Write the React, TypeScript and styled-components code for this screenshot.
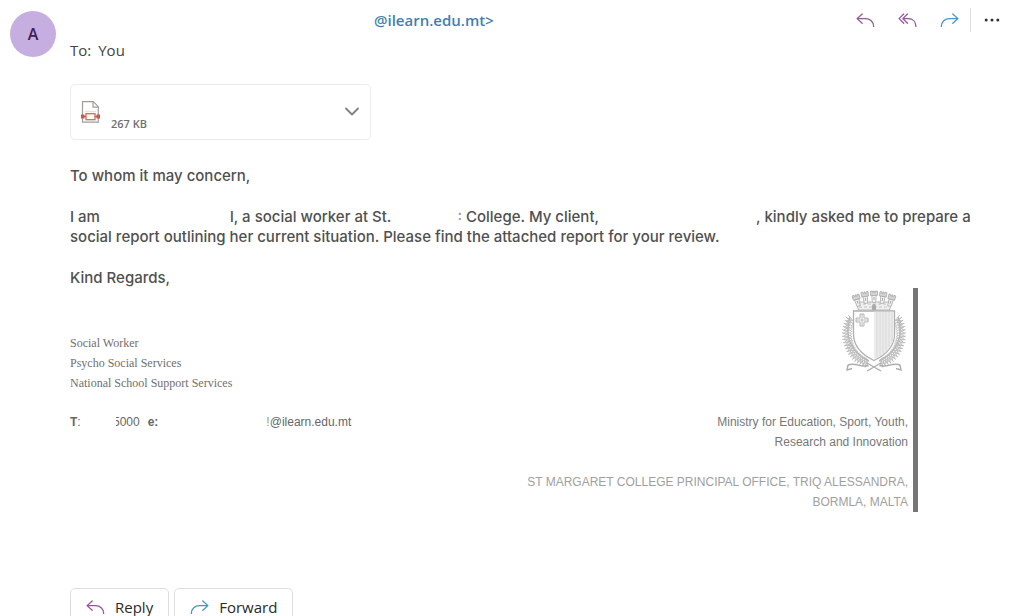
import React from "react";
import styled, { createGlobalStyle } from "styled-components";

const Global = createGlobalStyle`
  *, *::before, *::after { box-sizing: border-box; }
  body { margin: 0; background: #fff; font-family: "Open Sans", "Noto Sans", sans-serif; color: #444; }
  p { margin: 0; }
`;

const Page = styled.article`
  height: 100vh;
  overflow: hidden;
  display: grid;
  grid-template-columns: 46px minmax(0, 1fr);
  column-gap: 14px;
  padding: 8px 12px 0 10px;
`;

const Avatar = styled.div`
  width: 46px;
  height: 46px;
  margin-top: 3px;
  border-radius: 50%;
  background: #c6afe0;
  color: #3d2058;
  display: flex;
  align-items: center;
  justify-content: center;
  font-size: 16px;
  font-weight: 600;
`;

const Content = styled.div`
  display: flex;
  flex-direction: column;
  min-width: 0;
`;

const TopRow = styled.header`
  display: flex;
  justify-content: space-between;
  align-items: center;
  height: 24px;
`;

const Sender = styled.a`
  margin-left: 304px;
  font-size: 15px;
  line-height: 24px;
  font-weight: 600;
  color: #3f7fb0;
  text-decoration: none;
`;

const Actions = styled.div`
  display: flex;
  align-items: center;
`;

const IconButton = styled.button`
  width: 42px;
  height: 24px;
  padding: 0;
  border: 0;
  background: none;
  display: flex;
  align-items: center;
  justify-content: center;
`;

const MoreButton = styled(IconButton)`
  border-left: 1px solid #dedede;
`;

const Recipients = styled.p`
  margin-top: 8px;
  font-size: 15px;
  line-height: 20px;
`;

const Label = styled.span`
  margin-right: 7px;
`;

const Attachment = styled.div`
  width: 301px;
  height: 56px;
  margin-top: 24px;
  padding: 0 10px;
  border: 1px solid #ececec;
  border-radius: 5px;
  display: flex;
  align-items: center;
`;

const FileSize = styled.span`
  flex: 1;
  align-self: flex-end;
  margin: 0 0 6px 11px;
  font-size: 11px;
  line-height: 18px;
  font-weight: 600;
  color: #707070;
`;

const ExpandButton = styled(IconButton)`
  width: 16px;
`;

const Letter = styled.div`
  margin-top: 26px;
  display: flex;
  flex-direction: column;
  gap: 21px;
  font-family: Inter, sans-serif;
  font-size: 15px;
  font-weight: 500;
  line-height: 20px;
  color: #505050;
`;

const Gap = styled.span<{ $width: number }>`
  display: inline-block;
  width: ${(p) => p.$width}px;
`;

const Faint = styled.span`
  color: #999;
`;

const Signature = styled.section`
  max-width: 848px;
  padding-right: 5px;
  border-right: 5px solid #757575;
  display: grid;
  grid-template-columns: auto 1fr;
  grid-template-rows: 124px auto;
  font-family: "Liberation Sans", Arial, sans-serif;
  font-size: 12px;
  line-height: 20px;
  color: #777;
`;

const Titles = styled.div`
  padding-top: 45px;
  font-family: "Liberation Serif", "Times New Roman", serif;
  color: #707070;
`;

const CrestCell = styled.div`
  justify-self: end;
  padding-top: 2px;
`;

const Contact = styled.p`
  color: #666;
`;

const Clipped = styled.span<{ $width: number }>`
  display: inline-flex;
  justify-content: flex-end;
  overflow: hidden;
  vertical-align: bottom;
  width: ${(p) => p.$width}px;
`;

const Office = styled.div`
  text-align: right;
`;

const Address = styled.p`
  margin-top: 20px;
  color: #a0a0a0;
`;

const ReplyBar = styled.footer`
  display: flex;
  gap: 5px;
  margin-top: 76px;
`;

const ReplyButton = styled.button`
  height: 38px;
  padding: 0 15px;
  border: 1px solid #dedede;
  border-radius: 5px;
  background: #fff;
  color: #2a2a2a;
  font-family: inherit;
  font-size: 15px;
  line-height: 18px;
  display: flex;
  align-items: center;
  gap: 10px;
`;

const PURPLE = "#96569f";
const BLUE = "#4696c4";

const ReplyIcon = () => (
  <svg width="19" height="15" viewBox="0 0 20 16" fill="none" stroke={PURPLE} strokeWidth="1.4" strokeLinecap="round" strokeLinejoin="round">
    <path d="M6.500 1 1 6l5.500 5M1.300 6H10c5 0 8.500 3.500 8.700 8.300" />
  </svg>
);

const ReplyAllIcon = () => (
  <svg width="19" height="15" viewBox="0 0 20 16" fill="none" stroke={PURPLE} strokeWidth="1.4" strokeLinecap="round" strokeLinejoin="round">
    <path d="M6 1 1 6l5 5M10 1 5 6l5 5M5.300 6H11c4.800 0 7.800 3.500 8 8.300" />
  </svg>
);

const ForwardIcon = () => (
  <svg width="19" height="15" viewBox="0 0 20 16" fill="none" stroke={BLUE} strokeWidth="1.4" strokeLinecap="round" strokeLinejoin="round">
    <path d="M13.500 1 19 6l-5.500 5M18.700 6H10c-5 0-8.500 3.500-8.700 8.300" />
  </svg>
);

const MoreIcon = () => (
  <svg width="16" height="4" viewBox="0 0 16 4" fill="#333">
    <circle cx="2.2" cy="2" r="1.5" />
    <circle cx="8" cy="2" r="1.5" />
    <circle cx="13.8" cy="2" r="1.5" />
  </svg>
);

const ChevronIcon = () => (
  <svg width="16" height="10" viewBox="0 0 16 10" fill="none" stroke="#808080" strokeWidth="1.8" strokeLinecap="round" strokeLinejoin="round">
    <path d="m2 1.500 6 6 6-6" />
  </svg>
);

const FileIcon = () => (
  <svg width="19" height="22" viewBox="0 0 19 22" fill="none">
    <path d="M1.500 .7h10.800l5 5v15.500H1.500z" fill="#fff" stroke="#a29d99" strokeWidth="1.2" />
    <path d="M12 .7v5.500h5.300" stroke="#a29d99" strokeWidth="1.2" />
    <path d="M4 10.500h11" stroke="#eee3dc" strokeWidth="1.5" />
    <path d="M0 13.500h3.500v4H0zM15.500 13.500H19v4h-3.500z" fill="#c9594b" />
    <path d="M3 15.500h2M14 15.500h2" stroke="#c9594b" strokeWidth="1.5" />
    <rect x="5" y="12.700" width="9" height="6" fill="#fffaf2" stroke="#c9705c" strokeWidth="1.3" />
  </svg>
);

const leaves = Array.from({ length: 20 }, (_, i) => {
  const deg = 208 - i * 5.4;
  const a = (deg * Math.PI) / 180;
  return { x: 34 + 25 * Math.cos(a), y: 44 + 28 * Math.sin(a), deg };
});

const Wreath = () => (
  <g fill="none" stroke="#b8b8b8" strokeWidth=".8">
    <path d="M10 27C4 46 11 63 29 71" strokeWidth="1.4" />
    {leaves.map((l) => (
      <path
        key={l.deg}
        transform={`translate(${l.x} ${l.y}) rotate(${l.deg})`}
        d="M-2 0 6 3.500M0 0l7 .5M0 1l5-3.500M-1 0l-2 2.500"
      />
    ))}
  </g>
);

const towers = [
  { x: 15.5, y: 5, tilt: -16 },
  { x: 24.5, y: 2, tilt: -8 },
  { x: 34, y: 1, tilt: 0 },
  { x: 43.5, y: 2, tilt: 8 },
  { x: 52.5, y: 5, tilt: 16 },
];

const Crest = () => (
  <svg width="68" height="84" viewBox="0 0 68 84" role="img" aria-label="Coat of arms of Malta">
    <Wreath />
    <g transform="translate(68 0) scale(-1 1)">
      <Wreath />
    </g>
    <path d="M13.500 21h41v23c0 12-8 20.500-20.500 26.500C21.500 64.500 13.500 56 13.500 44z" fill="#fff" stroke="#b0b0b0" strokeWidth="1.3" />
    <path d="M34 21.700h19.900V44c0 12-8 20-19.900 25.800z" fill="#ebebeb" />
    <path d="M37 22v46M40 22v44M43 22v42M46 22v39M49 22v35M52 22v29" stroke="#d6d6d6" strokeWidth=".8" />
    <path d="M20 24h4v4h4v4h-4v4h-4v-4h-4v-4h4z" fill="#f3f3f3" stroke="#b0b0b0" strokeWidth=".9" />
    <path d="M22 24v12M16 30h12" stroke="#bbb" strokeWidth=".8" />
    <path d="m18.500 20-2-8h35l-2 8z" fill="#f0f0f0" stroke="#b0b0b0" strokeWidth=".9" />
    <path d="M19 17h30M18 14h32" stroke="#b8b8b8" strokeWidth=".8" strokeDasharray="3 2" />
    <path d="M32 20v-4a2 2 0 0 1 4 0v4z" fill="#aaa" />
    {towers.map((t) => (
      <g key={t.x} transform={`translate(${t.x} ${t.y}) rotate(${t.tilt})`} stroke="#adadad" strokeWidth=".8">
        <path d="M-2.200 4.500h4.400l-.5 7h-3.400z" fill="#f2f2f2" />
        <path d="M-3.500 0h2v1.500h1V0h1v1.500h1V0h2v4.500h-7z" fill="#d4d4d4" />
        <path d="M0 6v3" stroke="#999" />
      </g>
    ))}
    <path d="m27 73 14 8m0-8-14 8M8 75c7-3 13 3 20 .5M60 75c-7-3-13 3-20 .5M8 75l-1 5 5-1.500M60 75l1 5-5-1.500" fill="none" stroke="#adadad" strokeWidth="1.4" />
  </svg>
);

export default function App() {
  return (
    <>
      <Global />
      <Page>
        <Avatar>A</Avatar>
        <Content>
          <TopRow>
            <Sender href="#sender">@ilearn.edu.mt&gt;</Sender>
            <Actions>
              <IconButton aria-label="Reply"><ReplyIcon /></IconButton>
              <IconButton aria-label="Reply all"><ReplyAllIcon /></IconButton>
              <IconButton aria-label="Forward"><ForwardIcon /></IconButton>
              <MoreButton aria-label="More actions"><MoreIcon /></MoreButton>
            </Actions>
          </TopRow>
          <Recipients><Label>To:</Label>You</Recipients>
          <Attachment>
            <FileIcon />
            <FileSize>267 KB</FileSize>
            <ExpandButton aria-label="Attachment options"><ChevronIcon /></ExpandButton>
          </Attachment>
          <Letter>
            <p>To whom it may concern,</p>
            <p>
              I am<Gap $width={130} />l, a social worker at St.<Gap $width={66} />
              <Faint>:</Faint> College. My client,<Gap $width={157} />, kindly asked me to prepare a
              social report outlining her current situation. Please find the attached report for your review.
            </p>
            <p>Kind Regards,</p>
          </Letter>
          <Signature>
            <Titles>
              <p>Social Worker</p>
              <p>Psycho Social Services</p>
              <p>National School Support Services</p>
            </Titles>
            <CrestCell><Crest /></CrestCell>
            <Contact>
              <b>T</b>:<Gap $width={35} /><Clipped $width={24}>5000</Clipped><Gap $width={8} /><b>e:</b><Gap $width={108} /><Faint>!</Faint>@ilearn.edu.mt
            </Contact>
            <Office>
              <p>Ministry for Education, Sport, Youth,<br />Research and Innovation</p>
              <Address>ST MARGARET COLLEGE PRINCIPAL OFFICE, TRIQ ALESSANDRA,<br />BORMLA, MALTA</Address>
            </Office>
          </Signature>
          <ReplyBar>
            <ReplyButton><ReplyIcon />Reply</ReplyButton>
            <ReplyButton><ForwardIcon />Forward</ReplyButton>
          </ReplyBar>
        </Content>
      </Page>
    </>
  );
}
